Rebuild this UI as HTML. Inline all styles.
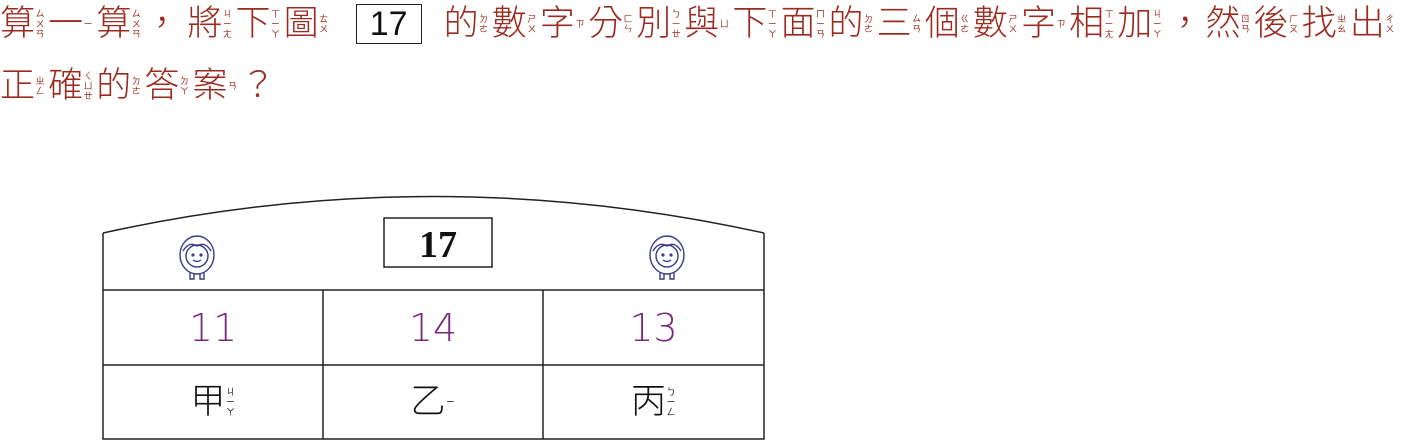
<!DOCTYPE html><html><head><meta charset="utf-8"><style>
body{margin:0;width:1402px;height:440px;background:#fff;position:relative;overflow:hidden;font-family:"Liberation Sans","Noto Sans CJK TC",sans-serif;}
.line{position:absolute;left:0;display:flex;align-items:center;color:#9b2a1f;white-space:nowrap}
.u{display:flex;align-items:center;margin-right:3.1px}
.c{font-size:35px;line-height:40px;font-weight:300}
.b{display:flex;flex-direction:column;font-size:9px;line-height:10px;width:10px;margin-left:0px;text-align:center}
.b i{font-style:normal}
.box{border:1.5px solid #222;color:#111;font-size:34px;width:64px;height:38px;line-height:38px;text-align:center;margin:0 22px 0 24px}
.cell{position:absolute;display:flex;align-items:center;justify-content:center}
.n{color:#7a2a7e;font-size:38px;font-family:"DejaVu Sans","Liberation Sans",sans-serif;font-weight:300}
.k{color:#111}
</style></head><body>
<div class="line" style="top:4px">
<span class="u"><span class="c">算</span><span class="b"><i>ㄙ</i><i>ㄨ</i><i>ㄢ</i></span></span>
<span class="u"><span class="c">一</span><span class="b"><i>ㄧ</i></span></span>
<span class="u"><span class="c">算</span><span class="b"><i>ㄙ</i><i>ㄨ</i><i>ㄢ</i></span></span>
<span class="u" style="margin-right:8px"><span class="c">，</span></span>
<span class="u"><span class="c">將</span><span class="b"><i>ㄐ</i><i>ㄧ</i><i>ㄤ</i></span></span>
<span class="u"><span class="c">下</span><span class="b"><i>ㄒ</i><i>ㄧ</i><i>ㄚ</i></span></span>
<span class="u"><span class="c">圖</span><span class="b"><i>ㄊ</i><i>ㄨ</i></span></span>
<span class="box">17</span>
<span class="u"><span class="c">的</span><span class="b"><i>ㄉ</i><i>ㄜ</i></span></span>
<span class="u"><span class="c">數</span><span class="b"><i>ㄕ</i><i>ㄨ</i></span></span>
<span class="u"><span class="c">字</span><span class="b"><i>ㄗ</i></span></span>
<span class="u"><span class="c">分</span><span class="b"><i>ㄈ</i><i>ㄣ</i></span></span>
<span class="u"><span class="c">別</span><span class="b"><i>ㄅ</i><i>ㄧ</i><i>ㄝ</i></span></span>
<span class="u"><span class="c">與</span><span class="b"><i>ㄩ</i></span></span>
<span class="u"><span class="c">下</span><span class="b"><i>ㄒ</i><i>ㄧ</i><i>ㄚ</i></span></span>
<span class="u"><span class="c">面</span><span class="b"><i>ㄇ</i><i>ㄧ</i><i>ㄢ</i></span></span>
<span class="u"><span class="c">的</span><span class="b"><i>ㄉ</i><i>ㄜ</i></span></span>
<span class="u"><span class="c">三</span><span class="b"><i>ㄙ</i><i>ㄢ</i></span></span>
<span class="u"><span class="c">個</span><span class="b"><i>ㄍ</i><i>ㄜ</i></span></span>
<span class="u"><span class="c">數</span><span class="b"><i>ㄕ</i><i>ㄨ</i></span></span>
<span class="u"><span class="c">字</span><span class="b"><i>ㄗ</i></span></span>
<span class="u"><span class="c">相</span><span class="b"><i>ㄒ</i><i>ㄧ</i><i>ㄤ</i></span></span>
<span class="u"><span class="c">加</span><span class="b"><i>ㄐ</i><i>ㄧ</i><i>ㄚ</i></span></span>
<span class="u" style="margin-left:2px"><span class="c">，</span></span>
<span class="u"><span class="c">然</span><span class="b"><i>ㄖ</i><i>ㄢ</i></span></span>
<span class="u"><span class="c">後</span><span class="b"><i>ㄏ</i><i>ㄡ</i></span></span>
<span class="u"><span class="c">找</span><span class="b"><i>ㄓ</i><i>ㄠ</i></span></span>
<span class="u"><span class="c">出</span><span class="b"><i>ㄔ</i><i>ㄨ</i></span></span>
</div>
<div class="line" style="top:66px">
<span class="u"><span class="c">正</span><span class="b"><i>ㄓ</i><i>ㄥ</i></span></span>
<span class="u"><span class="c">確</span><span class="b"><i>ㄑ</i><i>ㄩ</i><i>ㄝ</i></span></span>
<span class="u"><span class="c">的</span><span class="b"><i>ㄉ</i><i>ㄜ</i></span></span>
<span class="u"><span class="c">答</span><span class="b"><i>ㄉ</i><i>ㄚ</i></span></span>
<span class="u"><span class="c">案</span><span class="b"><i>ㄢ</i></span></span>
<span class="u"><span class="c">？</span></span>
</div>
<svg width="1402" height="440" style="position:absolute;left:0;top:0">
<g fill="none" stroke="#222" stroke-width="1.5">
<path d="M103 233 Q433 160 764 233"/>
<path d="M103 233 V439 H764 V233 M103 290 H764 M103 365 H764 M323 290 V439 M543 290 V439"/>
<rect x="384" y="218" width="108" height="49"/>
</g>
<g fill="none" stroke="#3a3a8c" stroke-width="1.4">
<g transform="translate(197,255)"><ellipse rx="17" ry="19"/><ellipse rx="11" ry="11" cy="1"/><path d="M-4 5 Q0 8 4 5M-7 18V24H-3V18M3 18V24H7V18M-14 -4 Q-8 -14 0 -9 Q8 -14 14 -4"/><circle cx="-4" cy="0" r=".9"/><circle cx="4" cy="0" r=".9"/></g>
<g transform="translate(667,255)"><ellipse rx="17" ry="19"/><ellipse rx="11" ry="11" cy="1"/><path d="M-4 5 Q0 8 4 5M-7 18V24H-3V18M3 18V24H7V18M-14 -4 Q-8 -14 0 -9 Q8 -14 14 -4"/><circle cx="-4" cy="0" r=".9"/><circle cx="4" cy="0" r=".9"/></g>
</g>
<text x="438" y="257" text-anchor="middle" font-family="Liberation Serif" font-weight="bold" font-size="38" fill="#111">17</text>
</svg>
<div class="cell n" style="left:103px;top:290px;width:220px;height:75px">11</div>
<div class="cell n" style="left:323px;top:290px;width:220px;height:75px">14</div>
<div class="cell n" style="left:543px;top:290px;width:221px;height:75px">13</div>
<div class="cell k" style="left:103px;top:365px;width:220px;height:74px"><span class="c">甲</span><span class="b"><i>ㄐ</i><i>ㄧ</i><i>ㄚ</i></span></div>
<div class="cell k" style="left:323px;top:365px;width:220px;height:74px"><span class="c">乙</span><span class="b"><i>ㄧ</i></span></div>
<div class="cell k" style="left:543px;top:365px;width:221px;height:74px"><span class="c">丙</span><span class="b"><i>ㄅ</i><i>ㄧ</i><i>ㄥ</i></span></div>
</body></html>
